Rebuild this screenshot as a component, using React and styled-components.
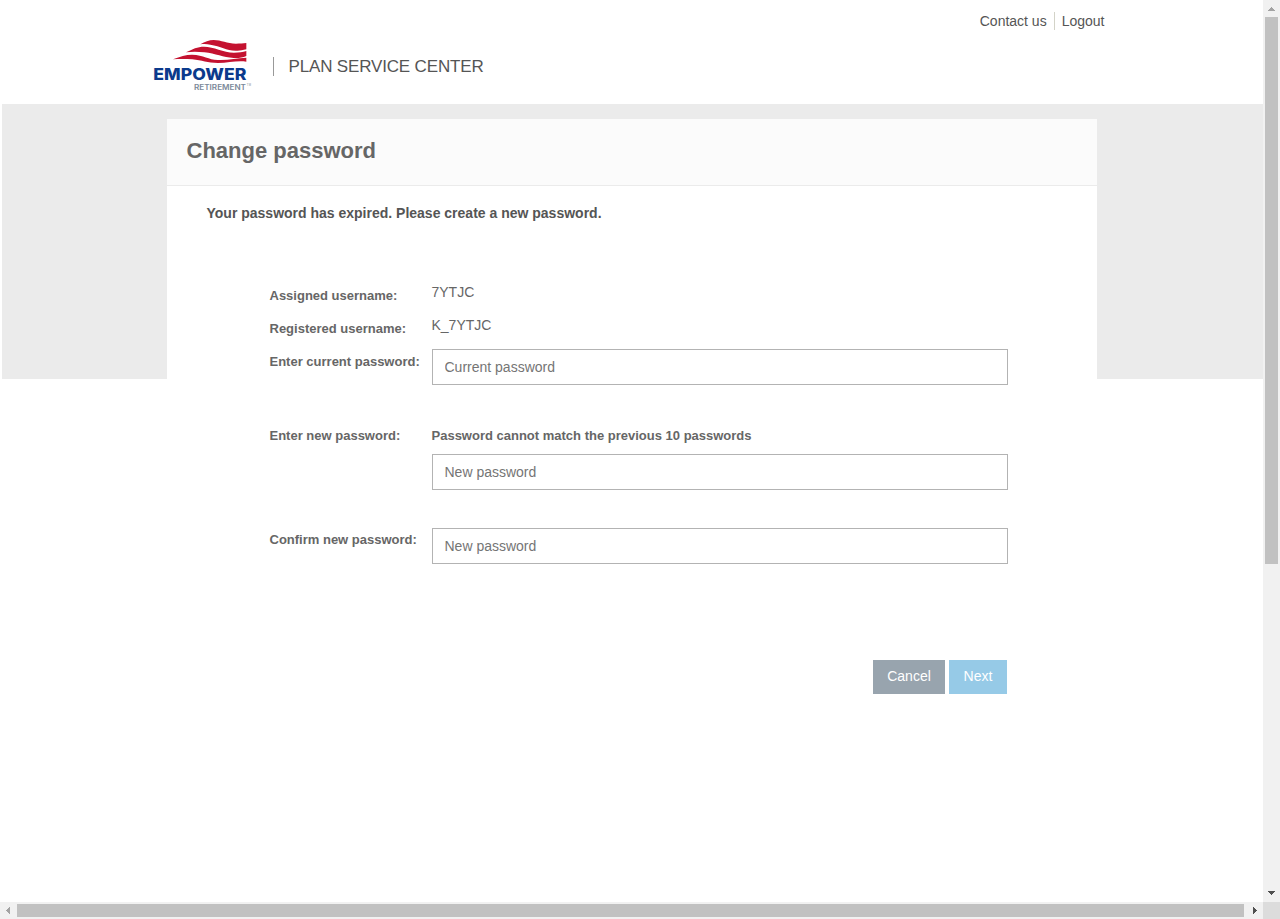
import React from "react";
import styled, { createGlobalStyle } from "styled-components";

const GlobalStyle = createGlobalStyle`
  * { box-sizing: border-box; }
  body { margin: 0; background: #fff; overflow: hidden; font-family: "Liberation Sans", Arial, sans-serif; }
`;

const Window = styled.div`
  display: grid;
  grid-template-columns: 1fr 17px;
  grid-template-rows: 1fr 17px;
  width: 1280px;
  height: 919px;
`;

const Page = styled.div`
  min-width: 0;
  overflow: hidden;
  color: #666;
  font-size: 14px;
  line-height: 20px;
`;

const Header = styled.header`
  display: flex;
  justify-content: space-between;
  height: 104px;
  padding: 0 158.5px 0 145px;
`;

const Brand = styled.div`
  display: flex;
  padding-top: 30px;
`;

const Logo = styled.svg`
  display: block;
  width: 120px;
  height: 70px;
`;

const ProductName = styled.div`
  height: 19px;
  margin: 27px 0 0 8px;
  padding-left: 14.5px;
  border-left: 1px solid #999;
  color: #555;
  font-size: 17px;
  line-height: 19px;
  letter-spacing: -0.16px;
  white-space: nowrap;
`;

const Links = styled.nav`
  display: flex;
  padding-top: 12px;
`;

const Link = styled.a`
  height: 18px;
  color: #555;
  line-height: 18px;

  & + & {
    margin-left: 7px;
    padding-left: 7px;
    border-left: 1px solid #d3d3c8;
  }
`;

const Main = styled.main`
  margin-left: 2px;
  padding: 15px 166px 0 165px;
  background: linear-gradient(#ebebeb, #ebebeb) no-repeat 0 0 / 100% 275px;
`;

const Card = styled.section`
  width: 930px;
  height: 783px;
  background: #fff;
`;

const CardTitle = styled.h1`
  height: 67px;
  margin: 0;
  padding: 17px 19.5px 0;
  border-bottom: 1px solid #ebebeb;
  background: #fbfbfb;
  color: #666;
  font-size: 22px;
  line-height: 30px;
`;

const Notice = styled.p`
  margin: 17px 0 0 39.5px;
  color: #555;
  font-weight: bold;
`;

const Form = styled.form`
  display: flex;
  flex-direction: column;
  width: 738.5px;
  margin: 59px 0 0 102.5px;
`;

const Row = styled.div`
  display: grid;
  grid-template-columns: 162px 576px;
  height: ${(p) => p.$height}px;
`;

const Label = styled.label`
  padding-top: ${(p) => p.$top}px;
  font-size: 13px;
  font-weight: bold;
  line-height: 20px;
  white-space: nowrap;
`;

const Value = styled.span`
  line-height: 20px;
`;

const Hint = styled.div`
  padding-top: 1px;
  margin-bottom: 8px;
  font-size: 13px;
  font-weight: bold;
  line-height: 20px;
`;

const Input = styled.input`
  display: block;
  width: 576px;
  height: 36px;
  padding: 0 12px;
  border: 1px solid #b3b3b3;
  border-radius: 0;
  background: #fff;
  font: 14px "Liberation Sans", Arial, sans-serif;

  &::placeholder { color: #757575; opacity: 1; }
`;

const Actions = styled.div`
  display: flex;
  justify-content: flex-end;
  gap: 4px;
  padding-right: 1px;
`;

const Button = styled.button`
  width: ${(p) => p.$width}px;
  height: 34px;
  padding: 0 0 2px;
  border: 0;
  background: ${(p) => (p.$primary ? "#96cae7" : "#98a4ae")};
  color: #fff;
  font: 14px "Liberation Sans", Arial, sans-serif;
`;

const ScrollTrack = styled.div`
  display: flex;
  flex-direction: ${(p) => (p.$vertical ? "column" : "row")};
  background: #f1f1f1;
`;

const ScrollArrow = styled.svg`
  flex: none;
  width: 17px;
  height: 17px;
`;

const ScrollThumb = styled.div`
  width: ${(p) => (p.$vertical ? "13px" : "1227px")};
  height: ${(p) => (p.$vertical ? "547px" : "13px")};
  margin: ${(p) => (p.$vertical ? "0 2px auto" : "2px 0")};
  background: #c1c1c1;
`;

const ScrollCorner = styled.div`
  background: #dcdcdc;
`;

function Arrow({ points, color }) {
  return (
    <ScrollArrow viewBox="0 0 17 17" shapeRendering="crispEdges">
      <polygon points={points} fill={color} />
    </ScrollArrow>
  );
}

function EmpowerLogo() {
  return (
    <Logo viewBox="0 0 360 210" role="img" aria-label="Empower Retirement">
      <g fill="#c41230">
        <path d="M166 43C180 35 192 30 206 30C229 30 246 41 273 41C285 41 294 40 304 39V58C292 61 283 63 272 62C244 61 227 49 196 44C186 42 176 42 166 43Z" />
        <path d="M123 67C143 57 157 50 177 50C207 50 234 67 267 68C282 68 293 66 304 63V78C292 83 280 85 266 84C234 83 212 70 178 67C158 65 140 65 123 67Z" />
        <path d="M84 88C106 80 122 74 141 74C177 75 190 89 218 90C250 92 273 83 304 83V95C275 91 251 99 219 99C187 99 171 91 142 88C121 87 103 87 84 88Z" />
      </g>
      <text x="25" y="149.5" fill="#0b3a8c" fontFamily="Inter, sans-serif" fontWeight="800" fontSize="47" textLength="279" lengthAdjust="spacingAndGlyphs">EMPOWER</text>
      <text x="147" y="179" fill="#7b8999" fontFamily="Inter, sans-serif" fontWeight="600" fontSize="21" textLength="156" lengthAdjust="spacingAndGlyphs">RETIREMENT</text>
      <text x="305" y="169" fill="#8593a2" fontFamily="Liberation Sans, Arial, sans-serif" fontSize="8" textLength="13">TM</text>
    </Logo>
  );
}

export default function App() {
  return (
    <>
      <GlobalStyle />
      <Window>
        <Page>
          <Header>
            <Brand>
              <EmpowerLogo />
              <ProductName>PLAN SERVICE CENTER</ProductName>
            </Brand>
            <Links>
              <Link>Contact us</Link>
              <Link>Logout</Link>
            </Links>
          </Header>
          <Main>
            <Card>
              <CardTitle>Change password</CardTitle>
              <Notice>Your password has expired. Please create a new password.</Notice>
              <Form>
                <Row $height={33}>
                  <Label $top={4}>Assigned username:</Label>
                  <Value>7YTJC</Value>
                </Row>
                <Row $height={34}>
                  <Label $top={4}>Registered username:</Label>
                  <Value>K_7YTJC</Value>
                </Row>
                <Row $height={76}>
                  <Label $top={3}>Enter current password:</Label>
                  <Input placeholder="Current password" />
                </Row>
                <Row $height={103}>
                  <Label $top={1}>Enter new password:</Label>
                  <div>
                    <Hint>Password cannot match the previous 10 passwords</Hint>
                    <Input placeholder="New password" />
                  </div>
                </Row>
                <Row $height={132}>
                  <Label $top={2}>Confirm new password:</Label>
                  <Input placeholder="New password" />
                </Row>
                <Actions>
                  <Button type="button" $width={72}>Cancel</Button>
                  <Button type="button" $width={58} $primary>Next</Button>
                </Actions>
              </Form>
            </Card>
          </Main>
        </Page>
        <ScrollTrack $vertical>
          <Arrow points="5,11 8,7 9,7 12,11" color="#a3a3a3" />
          <ScrollThumb $vertical />
          <Arrow points="5,6 12,6 9,10 8,10" color="#505050" />
        </ScrollTrack>
        <ScrollTrack>
          <Arrow points="10,5 10,12 6,9 6,8" color="#a3a3a3" />
          <ScrollThumb />
          <Arrow points="9,5 13,8 13,9 9,12" color="#505050" />
        </ScrollTrack>
        <ScrollCorner />
      </Window>
    </>
  );
}
